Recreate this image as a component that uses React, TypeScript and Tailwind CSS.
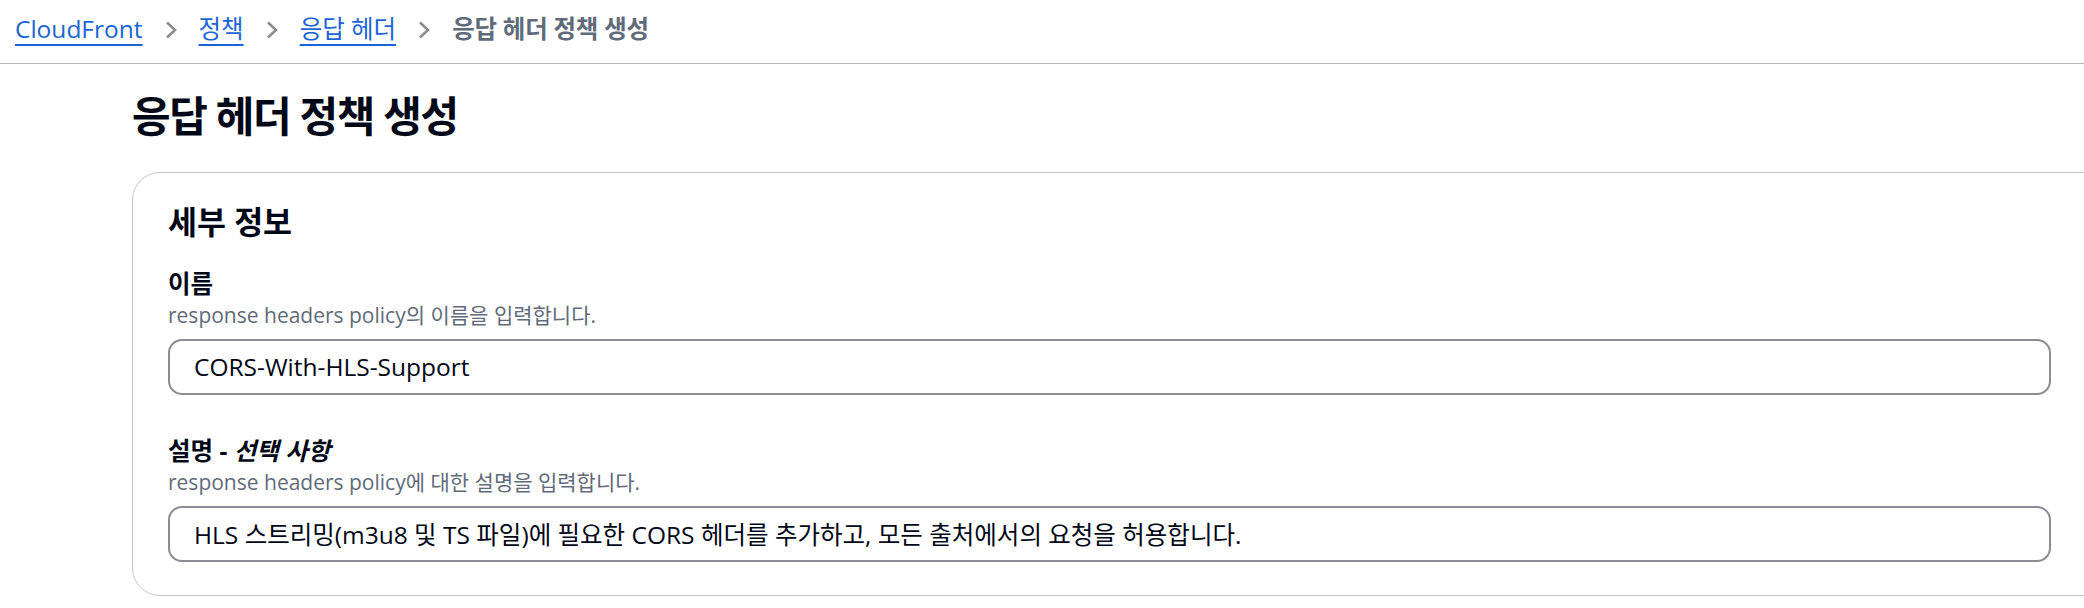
import React from "react";

function Chevron() {
  return (
    <svg width="12" height="18" viewBox="0 0 12 18" className="shrink-0 mx-[22px]">
      <path d="M2 1.5 L10 9 L2 16.5" fill="none" stroke="#8c8c94" strokeWidth="2.6" strokeLinejoin="miter" />
    </svg>
  );
}

function Crumb({ children }: { children: React.ReactNode }) {
  return (
    <a className="text-[#1a65d6] underline decoration-2 underline-offset-[6px] cursor-pointer">{children}</a>
  );
}

function Field({
  label,
  optional,
  hint,
  value,
}: {
  label: string;
  optional?: string;
  hint: string;
  value: string;
}) {
  return (
    <div className="flex flex-col">
      <label className="text-[24.5px] leading-[35px] font-bold text-[#000716]">
        {label}
        {optional && (
          <>
            {" - "}
            <i>{optional}</i>
          </>
        )}
      </label>
      <p className="text-[21px] leading-[28px] text-[#5f6b7a]">{hint}</p>
      <input
        type="text"
        defaultValue={value}
        className="mt-[10px] h-[56px] w-full rounded-[14px] border-2 border-[#8c8c94] bg-white px-[24px] text-[24.5px] text-[#000716] outline-none"
      />
    </div>
  );
}

export default function App() {
  return (
    <div className="w-full min-h-[608px] overflow-hidden bg-white font-['Open_Sans','Noto_Sans_CJK_KR',sans-serif] text-[#000716]">
      {/* Breadcrumbs */}
      <nav className="flex h-[64px] items-center border-b border-[#b4b4bb] pl-[15px] pb-[4px] text-[24.5px]">
        <Crumb>CloudFront</Crumb>
        <Chevron />
        <Crumb>정책</Crumb>
        <Chevron />
        <Crumb>응답 헤더</Crumb>
        <Chevron />
        <span className="font-bold text-[#5f6b7a] tracking-[-0.01em]">응답 헤더 정책 생성</span>
      </nav>

      <div className="pl-[132px]">
        <h1 className="pt-[26px] pb-[30px] text-[42px] leading-[52px] font-bold tracking-[-0.035em]">
          응답 헤더 정책 생성
        </h1>

        <section className="w-[1992px] rounded-[28px] border border-[#c6c6cd] bg-white pl-[35px] pr-[72px] pt-[30px] pb-[33px]">
          <h2 className="text-[31.5px] leading-[38.5px] font-bold">세부 정보</h2>
          <div className="mt-[24px] flex flex-col gap-[38px]">
            <Field
              label="이름"
              hint="response headers policy의 이름을 입력합니다."
              value="CORS-With-HLS-Support"
            />
            <Field
              label="설명"
              optional="선택 사항"
              hint="response headers policy에 대한 설명을 입력합니다."
              value="HLS 스트리밍(m3u8 및 TS 파일)에 필요한 CORS 헤더를 추가하고, 모든 출처에서의 요청을 허용합니다."
            />
          </div>
        </section>
      </div>
    </div>
  );
}
